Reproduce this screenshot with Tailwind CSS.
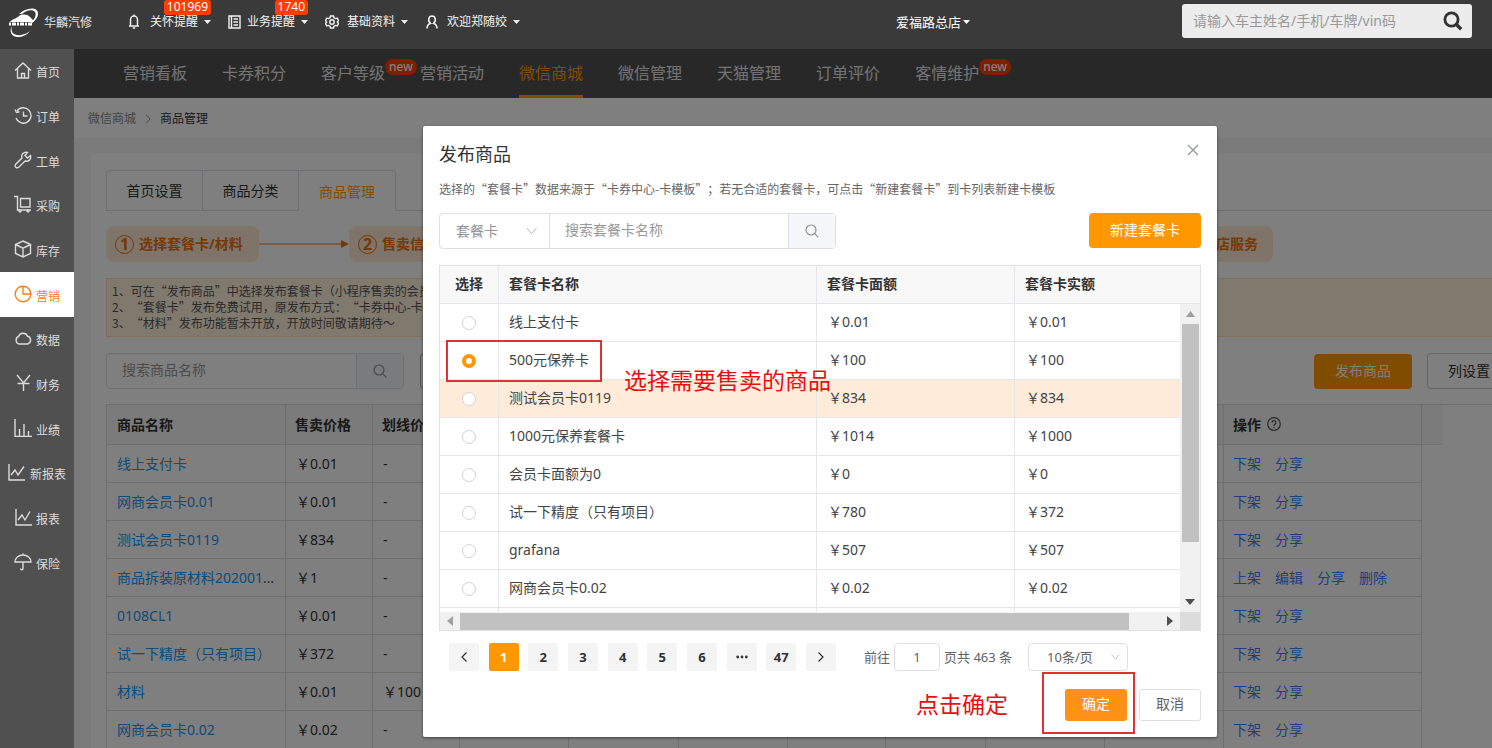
<!DOCTYPE html>
<html lang="zh-CN">
<head>
<meta charset="utf-8">
<title>商品管理</title>
<script src="https://cdn.jsdelivr.net/npm/@tailwindcss/browser@4"></script>
</head>
<body class="h-screen overflow-hidden flex flex-col bg-[#505050] text-sm text-[#333] font-['Noto_Sans','Noto_Sans_CJK_SC',sans-serif]">

<header class="h-[49px] shrink-0 bg-[#3a3a3a] text-[#f2f2f2] text-xs flex items-center pr-5">
  <div class="flex items-center gap-[5px] pl-[9px] pb-1 w-[128px]">
    <svg class="w-[30px] h-[30px]" viewBox="0 0 30 30" fill="none" aria-hidden="true">
      <path d="M10 6C16 0 28-2 29 5c.5 5-4 9-9 12 5-5 8-10 6-13-2-3-9-2-13 2z" fill="#fff"/>
      <path d="M1 14c2-3 6-3 9-6 3-2 8-2 11 1l4 4-1 1H1z" fill="#fff"/>
      <path d="M3 18c-2 7 3 10 9 9 4-1 7-2 9-4-3 4-8 6-12 6C2 29 0 23 3 18z" fill="#fff"/>
      <path d="M0 16h24" stroke="#fff" stroke-width="3" stroke-dasharray="2 1 4 1"/>
    </svg>
    <span class="text-[#e4e4e4]">华麟汽修</span>
  </div>
  <nav class="flex items-center gap-[17px] pb-1.5">
    <button class="relative flex items-center whitespace-nowrap">
      <svg class="w-3 h-4 mr-[10px]" viewBox="0 0 12 16" fill="none" stroke="currentColor" stroke-width="1.5"><path d="M1 12h10M2.500 12V6a3.500 4 0 0 1 7 0v6M6 .5v1.500M4.800 14h2.400"/></svg>
      关怀提醒
      <svg class="w-[7px] h-1 ml-[6px]" viewBox="0 0 7 4" fill="currentColor"><path d="M0 0h7L3.500 4z"/></svg>
      <span class="absolute -top-[14px] right-0 h-[15px] px-[3px] leading-[14px] rounded-[3px] bg-[#ff3d00] text-white">101969</span>
    </button>
    <button class="relative flex items-center whitespace-nowrap">
      <svg class="w-[13px] h-[14px] mr-[6px]" viewBox="0 0 13 14" fill="none" stroke="currentColor" stroke-width="1.400"><path d="M1 1h11v12H1zM3.500 1v12M5.500 4h4.500M5.500 7h4.500M5.500 10h4.500"/></svg>
      业务提醒
      <svg class="w-[7px] h-1 ml-[6px]" viewBox="0 0 7 4" fill="currentColor"><path d="M0 0h7L3.500 4z"/></svg>
      <span class="absolute -top-[14px] right-0 h-[15px] px-[3px] leading-[14px] rounded-[3px] bg-[#ff3d00] text-white">1740</span>
    </button>
    <button class="flex items-center whitespace-nowrap">
      <svg class="w-[14px] h-[14px] mr-2" viewBox="0 0 14 14" fill="none" stroke="currentColor" stroke-width="1.400"><path d="M5.500 1h3l.5 1.800 1.500.8 1.800-.5 1.200 2.400L12.300 7l1.200 1.500-1.200 2.400-1.800-.5-1.500.8L8.500 13h-3L5 11.200l-1.500-.8-1.800.5L.5 8.500 1.700 7 .5 5.500l1.200-2.400 1.800.5L5 2.800z"/><circle cx="7" cy="7" r="2.200"/></svg>
      基础资料
      <svg class="w-[7px] h-1 ml-[6px]" viewBox="0 0 7 4" fill="currentColor"><path d="M0 0h7L3.500 4z"/></svg>
    </button>
    <button class="flex items-center whitespace-nowrap">
      <svg class="w-[14px] h-[14px] mr-[8px]" viewBox="0 0 14 14" fill="none" stroke="currentColor" stroke-width="1.600"><path d="M2 13.500c0-3 1.500-4.500 3.500-5.200C2.500 6 3.500 1 7 1s4.500 5 1.500 7.300C10.500 9 12 10.500 12 13.500"/></svg>
      欢迎郑随姣
      <svg class="w-[7px] h-1 ml-[6px]" viewBox="0 0 7 4" fill="currentColor"><path d="M0 0h7L3.500 4z"/></svg>
    </button>
  </nav>
  <button class="ml-auto mr-[212px] pb-1 flex items-center gap-[2px] text-[13px] text-white">爱福路总店
    <svg class="w-[7px] h-1" viewBox="0 0 7 4" fill="currentColor"><path d="M0 0h7L3.500 4z"/></svg>
  </button>
  <form class="flex items-center w-[290px] h-[34px] mb-[7px] rounded-[3px] bg-[#ececec] pl-[11px] pr-[9px]">
    <input aria-label="搜索车主" placeholder="请输入车主姓名/手机/车牌/vin码" class="flex-1 min-w-0 text-sm bg-transparent outline-none placeholder:text-[#999]">
    <button type="button" aria-label="搜索"><svg class="w-5 h-5" viewBox="0 0 20 20" fill="none" stroke="#333" stroke-width="2.800"><circle cx="8.500" cy="8.500" r="6.600"/><path d="M13.200 13.200l5 5" stroke-width="3.400"/></svg></button>
  </form>
</header>

<div class="flex flex-1 min-h-0">
  <aside class="w-[74px] shrink-0 text-xs text-[#dcdcdc]">
    <nav id="side" class="h-[536px] grid grid-rows-12"></nav>
  </aside>

  <main class="relative flex-1 min-w-0 overflow-hidden bg-[#f5f5f5] flex flex-col">
    <nav class="h-[49px] shrink-0 bg-[#505050] text-base text-[#e6e6e6] flex gap-[35px] pl-[49px] leading-[49px] whitespace-nowrap">
      <a href="#">营销看板</a>
      <a href="#">卡券积分</a>
      <a href="#" class="relative">客户等级<span class="absolute left-full top-[10px] px-1 h-4 leading-[15px] text-xs font-medium rounded-lg bg-[#ff3d00] text-white">new</span></a>
      <a href="#">营销活动</a>
      <a href="#" class="text-[#ff9800] border-b-3 border-[#ff9800]">微信商城</a>
      <a href="#">微信管理</a>
      <a href="#">天猫管理</a>
      <a href="#">订单评价</a>
      <a href="#" class="relative">客情维护<span class="absolute left-full top-[10px] px-1 h-4 leading-[15px] text-xs font-medium rounded-lg bg-[#ff3d00] text-white">new</span></a>
    </nav>
    <div class="h-10 shrink-0 bg-white flex items-center gap-[9px] pl-[14px] pt-px text-xs">
      <a href="#" class="text-[#888]">微信商城</a>
      <svg class="w-1.5 h-2.5" viewBox="0 0 6 10" fill="none" stroke="#999"><path d="M1 .5L5 5 1 9.500"/></svg>
      <span>商品管理</span>
    </div>

    <section class="mt-[15px] ml-[17px] mr-[-35px] bg-white flex-1 px-4 pt-[17px] pl-[15px]">
      <div class="flex leading-[38px] whitespace-nowrap">
        <div class="flex border border-b-0 border-[#dcdfe6] rounded-t">
          <button class="w-[96px] pt-px border-b border-r border-[#dcdfe6]">首页设置</button>
          <button class="w-[96px] pt-px border-b border-r border-[#dcdfe6]">商品分类</button>
          <button class="w-[96px] pt-px text-[#ff9800]">商品管理</button>
        </div>
        <div class="flex-1 border-b border-[#dcdfe6]"></div>
      </div>

      <div class="flex items-center w-[1167px] mt-[15px] text-[#e8730c] font-bold whitespace-nowrap">
        <div class="flex items-center gap-[5px] h-9 w-[153px] pl-[9px] rounded-lg bg-[#ffe8d3]"><span class="w-[19px] h-[19px] rounded-full border border-[#e8730c] text-center leading-[17px] text-base">1</span>选择套餐卡/材料</div>
        <svg class="w-[90px] h-2 shrink-0" viewBox="0 0 90 8"><path d="M0 4h84" stroke="#e8730c"/><path d="M82 0l8 4-8 4z" fill="#e8730c"/></svg>
        <div class="flex flex-1 items-center gap-[5px] h-9 pl-[9px] rounded-lg bg-[#ffe8d3]"><span class="w-[19px] h-[19px] rounded-full border border-[#e8730c] text-center leading-[17px] text-base">2</span>售卖信息设置</div>
        <svg class="w-[90px] h-2 shrink-0" viewBox="0 0 90 8"><path d="M0 4h84" stroke="#e8730c"/><path d="M82 0l8 4-8 4z" fill="#e8730c"/></svg>
        <div class="flex items-center gap-[5px] h-9 pl-[9px] pr-[15px] rounded-lg bg-[#ffe8d3]"><span class="w-[19px] h-[19px] rounded-full border border-[#e8730c] text-center leading-[17px] text-base">3</span>到店服务</div>
      </div>

      <div class="mt-4 h-[59px] pt-1 px-[5px] border border-[#ffe0b0] bg-[#fff3dc] text-xs leading-4 text-[#555] whitespace-nowrap [text-spacing-trim:space-all] font-['Noto_Sans_CJK_SC',sans-serif]">
        <p>1、可在“发布商品”中选择发布套餐卡（小程序售卖的会员卡）</p>
        <p>2、“套餐卡”发布免费试用，原发布方式：“卡券中心-卡模板”</p>
        <p>3、“材料”发布功能暂未开放，开放时间敬请期待～</p>
      </div>

      <div class="mt-4 flex items-center">
        <div class="flex w-[298px] h-9 border border-[#dcdfe6] rounded">
          <input aria-label="商品名称" placeholder="搜索商品名称" class="flex-1 min-w-0 px-[15px] pb-0.5 outline-none placeholder:text-[#999]">
          <button aria-label="搜索商品" class="w-[47px] bg-[#f5f7fa] border-l border-[#dcdfe6] flex items-center justify-center"><svg class="w-[14px] h-[14px]" viewBox="0 0 14 14" fill="none" stroke="#8a8f99" stroke-width="1.200"><circle cx="6" cy="6" r="5"/><path d="M9.700 9.700L13.300 13.300"/></svg></button>
        </div>
        <button class="ml-4 h-9 w-[110px] border border-[#aaa] rounded">更多筛选</button>
        <button class="ml-auto h-[35px] w-[98px] rounded bg-[#ff9800] text-white">发布商品</button>
        <button class="ml-[15px] h-9 w-[84px] border border-[#ccc] rounded">列设置</button>
      </div>

      <div class="mt-[15px] border-t border-[#ddd] flex items-start">
        <table class="w-[1315px] shrink-0 table-fixed border-separate border-spacing-0 border-l border-[#dcdcdc]">
          <colgroup><col class="w-[179px]"><col class="w-[87px]"><col class="w-[87px]"><col class="w-[109px]"><col class="w-[110px]"><col class="w-[109px]"><col class="w-[98px]"><col class="w-[100px]"><col class="w-[119px]"><col class="w-[119px]"><col class="w-[198px]"></colgroup>
          <thead><tr id="ghead" class="h-10 text-left bg-[#f7f7f7]"></tr></thead>
          <tbody id="goods"></tbody>
        </table>
        <div class="w-[21px] h-10 shrink-0 bg-[#f7f7f7] border-b border-[#e6e6e6]"></div>
      </div>
    </section>

    <div class="absolute inset-0 bg-black/50"></div>
  </main>
</div>

<div role="dialog" aria-labelledby="dlg" class="absolute left-[423px] top-[126px] w-[794px] h-[611px] px-4 bg-white rounded-[2px] shadow-[0_1px_3px_rgba(0,0,0,.5)]">
  <div class="flex items-start justify-between pt-[14px] h-[54px]">
    <h1 id="dlg" class="text-lg">发布商品</h1>
    <button aria-label="关闭" class="mt-1 mr-[2px]"><svg class="w-3 h-3" viewBox="0 0 12 12" stroke="#909399" stroke-width="1.200"><path d="M1 1l10 10M11 1L1 11"/></svg></button>
  </div>
  <p class="text-xs leading-[18px] text-[#666] whitespace-nowrap [text-spacing-trim:space-all] font-['Noto_Sans_CJK_SC',sans-serif]">选择的“套餐卡”数据来源于“卡券中心-卡模板”；若无合适的套餐卡，可点击“新建套餐卡”到卡列表新建卡模板</p>
  <div class="mt-[15px] flex justify-between">
    <div class="flex w-[397px] h-9 border border-[#dcdfe6] rounded">
      <label class="relative w-[110px] border-r border-[#dcdfe6] flex">
        <select aria-label="卡类型" class="appearance-none w-full pl-4 text-[#909399] bg-transparent"><option>套餐卡</option></select>
        <svg class="absolute right-3 top-[13px] w-[11px] h-2" viewBox="0 0 11 8" fill="none" stroke="#b0b4bb"><path d="M.5 1l5 5.500 5-5.500"/></svg>
      </label>
      <input aria-label="套餐卡名称" placeholder="搜索套餐卡名称" class="flex-1 min-w-0 px-[15px] pb-0.5 outline-none placeholder:text-[#999]">
      <button aria-label="搜索套餐卡" class="w-[47px] bg-[#f5f7fa] border-l border-[#dcdfe6] flex items-center justify-center"><svg class="w-[14px] h-[14px]" viewBox="0 0 14 14" fill="none" stroke="#909399" stroke-width="1.200"><circle cx="6" cy="6" r="5"/><path d="M9.700 9.700L13.300 13.300"/></svg></button>
    </div>
    <button class="w-[112px] h-[35px] pb-0.5 rounded bg-[#ff9800] text-white">新建套餐卡</button>
  </div>

  <div class="relative mt-4 h-[366px] overflow-hidden border border-[#e0e0e0]">
    <table class="w-full table-fixed border-separate border-spacing-0 text-left">
      <colgroup><col class="w-[59px]"><col class="w-[318px]"><col class="w-[198px]"><col></colgroup>
      <thead><tr class="h-[38px] bg-[#f8f8f8]">
        <th class="pb-0.5 text-center border-b border-r border-[#e4e6ea]">选择</th>
        <th class="pb-0.5 pl-[10px] border-b border-r border-[#e4e6ea]">套餐卡名称</th>
        <th class="pb-0.5 pl-[10px] border-b border-r border-[#e4e6ea]">套餐卡面额</th>
        <th class="pb-0.5 pl-[10px] border-b border-[#e4e6ea]">套餐卡实额</th>
      </tr></thead>
      <tbody id="cards" class="text-[#444]"></tbody>
    </table>
    <div class="absolute right-0 top-[38px] bottom-[18px] w-5 bg-[#f1f1f1] flex flex-col items-center">
      <svg class="w-[9px] h-5 py-[7px]" viewBox="0 0 9 6" fill="#a0a0a0"><path d="M0 6L4.500 0 9 6z"/></svg>
      <div class="w-[17px] h-[218px] bg-[#c1c1c1]"></div>
      <svg class="w-[10px] h-5 py-[7px] mt-auto" viewBox="0 0 10 6" fill="#505050"><path d="M0 0h10L5 6z"/></svg>
    </div>
    <div class="absolute left-0 right-0 bottom-0 h-[18px] bg-[#f1f1f1] flex items-center">
      <svg class="w-5 h-[10px] px-[7px]" viewBox="0 0 6 10" fill="#a0a0a0"><path d="M6 0v10L0 5z"/></svg>
      <div class="w-[669px] h-[17px] bg-[#c1c1c1]"></div>
      <svg class="w-5 h-[10px] px-[7px] ml-auto" viewBox="0 0 6 10" fill="#505050"><path d="M0 0v10l6-5z"/></svg>
      <div class="w-5 h-full bg-[#dcdcdc]"></div>
    </div>
  </div>

  <div class="mt-3 pl-[10px] flex items-center text-[13px] whitespace-nowrap">
    <div class="w-[387px] flex justify-between font-bold text-[#303133]">
      <button aria-label="上一页" class="w-[30px] h-7 rounded-[2px] bg-[#f4f4f5] flex items-center justify-center"><svg class="w-1.5 h-2.5" viewBox="0 0 6 10" fill="none" stroke="#333" stroke-width="1.200"><path d="M5.500 .5L1 5l4.500 4.500"/></svg></button>
      <button class="w-[30px] h-7 rounded-[2px] bg-[#ff9800] text-white">1</button>
      <button class="w-[30px] h-7 rounded-[2px] bg-[#f4f4f5]">2</button>
      <button class="w-[30px] h-7 rounded-[2px] bg-[#f4f4f5]">3</button>
      <button class="w-[30px] h-7 rounded-[2px] bg-[#f4f4f5]">4</button>
      <button class="w-[30px] h-7 rounded-[2px] bg-[#f4f4f5]">5</button>
      <button class="w-[30px] h-7 rounded-[2px] bg-[#f4f4f5]">6</button>
      <button aria-label="更多页" class="w-[30px] h-7 rounded-[2px] bg-[#f4f4f5] flex items-center justify-center"><svg class="w-3 h-1" viewBox="0 0 12 4" fill="#333"><circle cx="1.700" cy="2" r="1.400"/><circle cx="6" cy="2" r="1.400"/><circle cx="10.300" cy="2" r="1.400"/></svg></button>
      <button class="w-[30px] h-7 rounded-[2px] bg-[#f4f4f5]">47</button>
      <button aria-label="下一页" class="w-[30px] h-7 rounded-[2px] bg-[#f4f4f5] flex items-center justify-center"><svg class="w-1.5 h-2.5" viewBox="0 0 6 10" fill="none" stroke="#333" stroke-width="1.200"><path d="M.5 .5L5 5 .5 9.500"/></svg></button>
    </div>
    <label class="ml-7 flex items-center gap-1 text-[#606266]">前往<input value="1" class="w-[46px] h-7 border border-[#dcdfe6] rounded text-center outline-none">页共 463 条</label>
    <label class="relative ml-4 w-[100px] h-7 border border-[#dcdfe6] rounded flex">
      <select aria-label="每页条数" class="appearance-none w-full pl-[18px] text-[#606266] bg-transparent"><option>10条/页</option></select>
      <svg class="absolute right-[7px] top-[10px] w-[9px] h-1.5" viewBox="0 0 9 6" fill="none" stroke="#c0c4cc"><path d="M.5 .5l4 4.500 4-4.500"/></svg>
    </label>
  </div>
  <div class="mt-[18px] flex justify-end gap-3">
    <button class="w-[62px] h-8 pb-0.5 rounded-[3px] bg-[#ff9116] text-white">确定</button>
    <button class="w-[62px] h-8 pb-0.5 rounded-[3px] border border-[#dcdfe6] text-[#606266]">取消</button>
  </div>

  <div class="absolute left-[23px] top-[214px] w-[156px] h-[42px] border-2 border-[#e33030]"></div>
  <div class="absolute left-[201px] top-[237px] text-[23px] leading-[34px] text-[#e81010] whitespace-nowrap">选择需要售卖的商品</div>
  <div class="absolute left-[619px] top-[546px] w-[93px] h-[62px] border-2 border-[#e33030]"></div>
  <div class="absolute left-[493px] top-[561px] text-[23px] leading-[34px] text-[#e81010] whitespace-nowrap">点击确定</div>
</div>

<script>
const side = [
  ['首页', '<path d="M1 9.500L9 2l8 7.500M3.500 8v9h11V8M7.500 17v-4.500h3V17"/>'],
  ['订单', '<path d="M3 5a7.700 7.700 0 1 1-1 7M1 3.500l1.500 3 3-.7M9.500 5.500V10h4"/>'],
  ['工单', '<path d="M16.500 4.500l-3 2.500-2.500-2.500 2.500-3c-4-1-6.500 2-5.500 5.500L1.500 13.500a2.200 2.200 0 0 0 3 3L11 10c3.500 1 6.500-1.500 5.500-5.500z"/>'],
  ['采购', '<path d="M0 1.500h3.500V15H17M6.500 3.500h9.500v8.500H6.500z"/><circle cx="6" cy="16" r="1"/><circle cx="14" cy="16" r="1"/>'],
  ['库存', '<path d="M9 1l7.500 3.500v9L9 17l-7.500-3.500v-9zM1.500 4.500L9 8.200l7.500-3.700M9 8.200V17"/>'],
  ['营销', '<circle cx="9" cy="9" r="7.800"/><path d="M9 1.200V9h7.800"/>'],
  ['数据', '<path d="M5 15a4 4 0 0 1-.5-7.500 4.800 4.800 0 0 1 9-.3A4 4 0 0 1 13.500 15z"/>'],
  ['财务', '<path d="M3 1l6.500 8L16 1M3.500 9.500h12M9.500 9v8"/>'],
  ['业绩', '<path d="M1 0v17.500h17M5.500 17v-7M10 17V5M14.500 17v-5"/>'],
  ['新报表', '<path d="M1 1v16h16M3 12l4-5 3 5 6-8.500"/>'],
  ['报表', '<path d="M2 1v16h16M4 12l4-5 3 5 5-8.500"/>'],
  ['保险', '<path d="M1 9a8 7 0 0 1 16 0zM9 2V.5M9 9v6.500a1.200 1.200 0 0 1-2.400 0"/>']
];
document.getElementById('side').innerHTML = side.map(([t, d]) =>
  `<a href="#" class="${t === '营销' ? 'flex items-center justify-center gap-1 bg-white text-[#ff8010]' : 'flex items-center justify-center gap-1'}"><svg class="w-[18px] h-[18px] mb-[2px]" viewBox="0 0 18 18" fill="none" stroke="currentColor" stroke-width="1.400">${d}</svg><span class="pt-1">${t}</span></a>`).join('');

const q = '<svg class="inline w-[14px] h-[14px] ml-1.5 align-[-1px]" viewBox="0 0 14 14" fill="none" stroke="#555" stroke-width="1.200"><circle cx="7" cy="7" r="6.300"/><path d="M5 5.500a2 2 0 1 1 2.800 1.900c-.6.300-.8.600-.8 1.300M7 9.700v1.200"/></svg>';
document.getElementById('ghead').innerHTML =
  ['商品名称', '售卖价格', '划线价格', '', '', '', '', '', '', '', '操作' + q].map((t, i) =>
    `<th class="${i ? 'pl-[9px] border-b border-r border-[#dcdcdc] whitespace-nowrap overflow-hidden' : 'pl-[10px] border-b border-r border-[#dcdcdc] whitespace-nowrap overflow-hidden'}">${t}</th>`).join('');
const goods = [['线上支付卡', '0.01'], ['网商会员卡0.01', '0.01'], ['测试会员卡0119', '834'], ['商品拆装原材料20200115', '1'],
  ['0108CL1', '0.01'], ['试一下精度（只有项目）', '372'], ['材料', '0.01', '￥100'], ['网商会员卡0.02', '0.02']];
document.getElementById('goods').innerHTML = goods.map(([n, p, l], i) => {
  const ops = (i === 3 ? ['上架', '编辑', '分享', '删除'] : ['下架', '分享']).map(o => `<a href="#" class="mr-[14px]">${o}</a>`).join('');
  return `<tr class="h-[38px]"><td class="px-[10px] border-b border-r border-[#dcdcdc] truncate text-[#555]"><a href="#" class="text-[#2196f3]">${n}</a></td>
    <td class="pl-[10px] border-b border-r border-[#dcdcdc]">￥${p}</td><td class="pl-[10px] border-b border-r border-[#dcdcdc]">${l || '-'}</td>` +
    '<td class="border-b border-r border-[#dcdcdc]"></td>'.repeat(7) +
    `<td class="pl-[9px] border-b border-r border-[#dcdcdc] text-[#3f7ff5]">${ops}</td></tr>`;
}).join('');

const cards = [['线上支付卡', '0.01', '0.01'], ['500元保养卡', '100', '100'], ['测试会员卡0119', '834', '834'], ['1000元保养套餐卡', '1014', '1000'],
  ['会员卡面额为0', '0', '0'], ['试一下精度（只有项目）', '780', '372'], ['grafana', '507', '507'], ['网商会员卡0.02', '0.02', '0.02'], ['', '', '']];
document.getElementById('cards').innerHTML = cards.map(([n, a, b], i) =>
  `<tr class="${i === 2 ? 'h-[38px] bg-[#feebd9]' : 'h-[38px]'}">
    <td class="border-b border-r border-[#e4e6ea]">${n ? `<input type="radio" name="card" aria-label="${n}" ${i === 1 ? 'checked' : ''} class="block mx-auto appearance-none w-[14px] h-[14px] rounded-full border border-[#d0d3d9] bg-white checked:border-[4px] checked:border-[#ff9800]">` : ''}</td>
    <td class="pl-[10px] pb-0.5 border-b border-r border-[#e4e6ea]">${n}</td>
    <td class="pl-[11px] pb-0.5 border-b border-r border-[#e4e6ea]">${a && '￥' + a}</td>
    <td class="pl-[11px] pb-0.5 border-b border-[#e4e6ea]">${b && '￥' + b}</td></tr>`).join('');
</script>
</body>
</html>
